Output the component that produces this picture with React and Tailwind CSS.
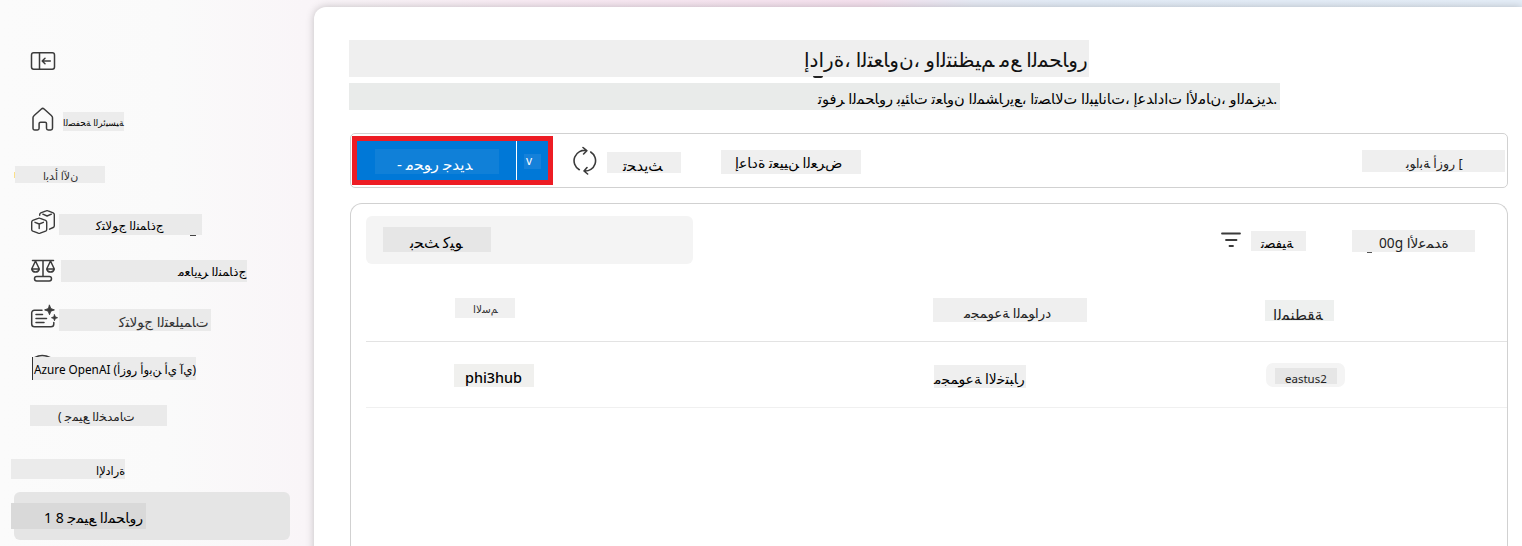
// Joined Arabic forms: first code point and number of contextual shapes.
const FORMS = {
  'ا': [0xfe8d, 2], 'أ': [0xfe83, 2], 'إ': [0xfe87, 2], 'آ': [0xfe81, 2], 'ب': [0xfe8f, 4], 'ة': [0xfe93, 2],
  'ت': [0xfe95, 4], 'ث': [0xfe99, 4], 'ج': [0xfe9d, 4], 'ح': [0xfea1, 4], 'خ': [0xfea5, 4], 'د': [0xfea9, 2],
  'ذ': [0xfeab, 2], 'ر': [0xfead, 2], 'ز': [0xfeaf, 2], 'س': [0xfeb1, 4], 'ش': [0xfeb5, 4], 'ص': [0xfeb9, 4],
  'ض': [0xfebd, 4], 'ط': [0xfec1, 4], 'ظ': [0xfec5, 4], 'ع': [0xfec9, 4], 'ف': [0xfed1, 4], 'ق': [0xfed5, 4],
  'ك': [0xfed9, 4], 'ل': [0xfedd, 4], 'م': [0xfee1, 4], 'ن': [0xfee5, 4], 'و': [0xfeed, 2], 'ي': [0xfef1, 4],
  'ئ': [0xfe89, 4], 'ﻻ': [0xfefb, 2], 'ﻵ': [0xfef5, 2], 'ﻷ': [0xfef7, 2], 'ﻹ': [0xfef9, 2],
};

function shape(text) {
  const merged = text.replace(/لا/g, 'ﻻ').replace(/لآ/g, 'ﻵ').replace(/لأ/g, 'ﻷ').replace(/لإ/g, 'ﻹ');
  const chars = [...merged];
  return chars
    .map((ch, i) => {
      const form = FORMS[ch];
      if (!form) return ch;
      const prev = FORMS[chars[i - 1]]?.[1] === 4;
      const next = Boolean(FORMS[chars[i + 1]]) && form[1] === 4;
      return String.fromCharCode(form[0] + (prev && next ? 3 : next ? 2 : prev ? 1 : 0));
    })
    .join('');
}

function Label({ children, className, mark }) {
  return (
    <div className={`relative flex shrink-0 items-start whitespace-nowrap leading-[18px] [unicode-bidi:bidi-override] ${className}`}>
      {shape(children)}
      {mark && <span className={`absolute ${mark}`} />}
    </div>
  );
}

function Icon({ children, className = '', ...rest }) {
  return (
    <svg fill="none" stroke="#3b3b3b" strokeWidth="1.5" strokeLinecap="round" strokeLinejoin="round" className={`shrink-0 ${className}`} {...rest}>
      {children}
    </svg>
  );
}

function Sidebar() {
  return (
    <aside className="flex h-full w-[314px] shrink-0 flex-col items-start">
      <Icon width="26" height="20" viewBox="0 0 26 20" className="mt-[51px] ml-[30px]">
        <rect x="1.5" y="1.7" width="23" height="16.6" rx="2.2" />
        <path d="M9.5 1.7v16.6M20.3 10h-8M15 7.3 12.2 10l2.8 2.7" />
      </Icon>

      <div className="mt-[36px] ml-[30px] flex h-[25px] items-start">
        <Icon width="26" height="25" viewBox="0 0 26 25">
          <path d="M3 10.8c0-.8.3-1.5.9-2L11.4 2a2 2 0 0 1 2.7 0l7.5 6.8c.6.5.9 1.2.9 2v10.4c0 1-.7 1.7-1.7 1.7h-2.6c-1 0-1.700-.7-1.700-1.700v-4.600c0-.9-.6-1.400-1.400-1.400h-4.500c-.9 0-1.500.5-1.500 1.400v4.600c0 1-.7 1.700-1.600 1.700H4.700c-1 0-1.700-.7-1.700-1.700z" />
        </Icon>
        <Label className="mt-[5px] ml-[7px] h-[19px] w-[61px] bg-[#ececec] pt-[2px] text-[8.9px] text-black">الصفحة الرئيسية</Label>
      </div>

      <Label mark="top-[6px] -left-px h-[6px] w-px bg-[#fbe08a]" className="mt-[34px] ml-[15px] h-[17px] w-[90px] bg-[#ececec] pt-px pl-[28px] text-[11px] text-[#333]">ابدأ الآن</Label>

      <div className="mt-[26px] ml-[30px] flex h-[27px] items-start">
        <Icon width="26" height="26" viewBox="0 0 26 26" strokeWidth="1.4">
          <path d="M9.700 6.300V5.500c0-.8.400-1.400 1.100-1.700l5.300-2c.7-.3 1.300-.3 2 0l5.100 2c.7.300 1.100.9 1.100 1.700v11.300c0 .8-.4 1.400-1.100 1.700l-3.700 1.700M12.800 5.200l4.300 1.800 4.300-1.800" />
          <path d="M1.700 13c0-.7.400-1.300 1.100-1.600l5.400-2c.7-.3 1.400-.3 2 0l5.400 2c.7.300 1.100.9 1.100 1.600v7.500c0 .8-.4 1.400-1.100 1.700l-5.400 2c-.7.2-1.300.2-2 0l-5.400-2c-.7-.3-1.100-.9-1.100-1.700zM5 13.300l4.200 1.700 4.200-1.700M9.200 15v4.500" />
        </Icon>
        <Label mark="top-[21px] left-[131px] h-px w-[6px] bg-[#444]" className="mt-[5px] ml-[3px] h-[21px] w-[143px] bg-[#eaeaea] pt-[3px] pl-[37px] text-[12px] text-black">كتالوج النماذج</Label>
      </div>

      <div className="mt-[22px] ml-[30px] flex h-[26px] items-start">
        <Icon width="26" height="26" viewBox="0 0 26 26">
          <path d="M2.500 2.500h21M13 2.500V18M5.500 3 1.700 11a3.900 3.900 0 0 0 7.600 0L5.500 3ZM1.700 11h7.600M20.500 3l-3.800 8a3.900 3.900 0 0 0 7.600 0zM16.700 11h7.600" />
          <rect x="4.500" y="18.500" width="17" height="4.500" rx="2.200" />
        </Icon>
        <Label className="mt-[2px] ml-[5px] h-[22px] w-[186px] bg-[#eaeaea] pt-[3px] pl-[117px] text-[12.3px] text-black">معايير النماذج</Label>
      </div>

      <div className="mt-[20px] ml-[30px] flex h-[27px] items-start">
        <Icon width="29" height="26" viewBox="0 0 29 26">
          <path d="M12 6.200H4.500c-1.700 0-2.800 1.200-2.800 2.800v11c0 1.600 1.100 2.800 2.800 2.800H21c1.700 0 2.800-1.200 2.800-2.800v-1.500M6 10.500h6.500M6 14.500h10.500M6 18.500h8" />
          <path d="M19.500 1.200l1.300 3.400 3.600 1.300-3.600 1.300-1.300 3.500-1.300-3.500-3.600-1.300 3.600-1.300zM24.500 10.800l.8 2.100 2.200.8-2.200.8-.8 2.200-.8-2.200-2.200-.8 2.200-.8z" fill="#3b3b3b" strokeWidth=".9" />
        </Icon>
        <Label className="mt-[5px] h-[22px] w-[152px] bg-[#eaeaea] pt-[4px] pl-[60px] text-[13.6px] text-[#333]">كتالوج التعليمات</Label>
      </div>

      <div className="mt-[23px] ml-[32px] flex flex-col">
        <Icon width="22" height="3" viewBox="0 0 22 3">
          <path d="M2 4Q10-1 19 4" />
        </Icon>
        <Label className="h-[23px] w-[164px] border-l border-[#333] bg-[#ebebeb] pt-[3px] pl-px text-[11.75px] text-black">Azure OpenAI (أزور أوبن أي آي)</Label>
      </div>

      <Label className="mt-[25px] ml-[30px] h-[21px] w-[137px] bg-[#eaeaea] pt-[3px] pl-[28px] text-[12px] text-[#222]">( جميع الخدمات</Label>
      <Label className="mt-[33px] ml-[11px] h-[20px] w-[114px] bg-[#ebebeb] pt-[3px] pl-[85px] text-[11.3px] text-black">الإدارة</Label>

      <div className="mt-[13px] ml-[14px] h-[48px] w-[276px] shrink-0 rounded-md bg-[#e5e5e5] pt-[11px]">
        <Label className="-ml-[3px] h-[26px] w-[135px] bg-[#d9d9d9] pt-[6px] pl-[33px] text-[14.1px] text-black">1 8 جميع المحاور</Label>
      </div>
    </aside>
  );
}

function Toolbar() {
  return (
    <div className="mt-[23px] flex h-[55px] w-[1158px] items-start rounded-[5px] border border-[#d1d1d1]">
      <div className="mt-[2px] ml-px flex h-[49px] w-[201px] shrink-0 border-[5px] border-[#ed1c24] bg-[#0078d7]">
        <div className="flex w-[160px] items-start border-r border-white">
          <Label className="mt-[8px] ml-[18px] h-[25px] w-[124px] bg-[#1080d8] pt-[6px] pl-[22px] text-[15.2px] text-white">- محور جديد</Label>
        </div>
        <Label className="mt-[13px] ml-[7px] h-[15px] w-[17px] bg-[#1581da] pt-px pl-[2px] text-[12px] leading-[12px]! text-white">v</Label>
      </div>
      <Icon width="25" height="29" viewBox="0 0 25 29" className="mt-[12px] ml-[20px]" strokeWidth="1.600">
        <path d="M6.300 23.700A10.300 10.300 0 0 1 13.700 4.700M10 1.500 13.800 4.700 10.600 8M17.700 6A10.300 10.300 0 0 1 11.300 25M14.600 28 11 25 14 21.500" />
      </Icon>
      <Label className="mt-[18px] ml-[9px] h-[21px] w-[74px] bg-[#efefef] pt-[4px] pl-[16px] text-[14.6px] text-black">تحديث</Label>
      <Label className="mt-[16px] ml-[40px] h-[24px] w-[140px] bg-[#efefef] pt-[4px] pl-[14px] text-[14.1px] text-black">إعادة تعيين العرض</Label>
      <Label className="mt-[16px] mr-[2px] ml-auto h-[22px] w-[143px] bg-[#efefef] pt-[4px] pl-[44px] text-[12.7px] text-[#222]">بوابة أزور [</Label>
    </div>
  );
}

function HubsTable() {
  return (
    <div className="mt-[15px] flex h-[360px] w-[1158px] flex-col rounded-t-[12px] border border-b-0 border-[#d1d1d1] pl-[15px]">
      <div className="flex h-[138px] shrink-0 flex-col border-b border-[#e3e3e3]">
        <div className="flex h-[94px] items-start">
          <div className="mt-[12px] h-[48px] w-[327px] rounded-md bg-[#f4f4f4] pt-[11px] pl-[17px]">
            <Label className="h-[25px] w-[108px] bg-[#e6e6e6] pt-[6px] pl-[27px] text-[15.2px] text-black">بحث كيو</Label>
          </div>
          <Icon width="22" height="18" viewBox="0 0 22 18" className="mt-[27px] ml-[527px]" strokeWidth="1.800">
            <path d="M2 2.500h18M6 9h10.500M9.500 15h3.500" />
          </Icon>
          <Label className="mt-[27px] ml-[9px] h-[20px] w-[55px] bg-[#efefef] pt-[3px] pl-[10px] text-[12.9px] text-black">تصفية</Label>
          <Label mark="top-[22px] left-[15px] h-px w-[5px] bg-[#555]" className="mt-[26px] ml-[46px] h-[22px] w-[123px] bg-[#efefef] pt-[4px] pl-[27px] text-[13.7px] text-[#222]">00g الأعمدة</Label>
        </div>
        <div className="flex items-start">
          <Label className="ml-[89px] h-[20px] w-[60px] bg-[#f0f0f0] pt-[2px] pl-[18px] text-[10.5px] text-[#333]">الاسم</Label>
          <Label className="ml-[418px] h-[24px] w-[154px] bg-[#efefef] pt-[6px] pl-[31px] text-[13.3px] text-[#222]">مجموعة الموارد</Label>
          <Label className="mt-[2px] ml-[178px] h-[21px] w-[69px] bg-[#eef0ef] pt-[5px] pl-[8px] text-[15px] text-[#222]">المنطقة</Label>
        </div>
      </div>
      <div className="flex h-[66px] shrink-0 items-start border-b border-[#f0f0f0] pt-[22px]">
        <Label className="ml-[88px] h-[23px] w-[80px] bg-[#f0f0ee] pt-[5px] pl-[11px] text-[14.4px] font-medium text-black">phi3hub</Label>
        <Label className="mt-px ml-[400px] h-[23px] w-[92px] bg-[#efefef] pt-[5px] text-[13.9px] text-black">مجموعة الاختبار</Label>
        <div className="-mt-px ml-[240px] h-[24px] w-[79px] rounded-[7px] bg-[#f4f4f4] pt-[5px] pl-[9px]">
          <Label className="h-[16px] w-[62px] bg-[#e6e6e6] pt-[2px] pl-[10px] text-[11.500px] text-[#222]">eastus2</Label>
        </div>
      </div>
    </div>
  );
}

export default function App() {
  return (
    <div
      dir="ltr"
      className="flex h-[546px] w-[1522px] overflow-hidden bg-[linear-gradient(90deg,#fbfbfb_0%,#fafafa_11%,#f9f5f8_20%,#f8eaf3_36%,#f5e1ee_57%,#e7ebf5_64%,#e3ecf7_70%,#e5eef8_100%)] font-['Noto_Sans','DejaVu_Sans',sans-serif]"
    >
      <Sidebar />
      <main className="mt-[7px] flex h-[560px] flex-1 flex-col items-start overflow-hidden rounded-tl-[12px] bg-white pl-[35px] shadow-[0_0_8px_rgba(0,0,0,0.22)]">
        <Label mark="top-[36px] left-[464px] h-[2px] w-[10px] rounded-b-full bg-[#222]" className="mt-[33px] h-[37px] w-[740px] bg-[#efefef] pt-[11px] pl-[455px] text-[20px] text-[#111]">إدارة، التعاون، والتنظيم مع المحاور</Label>
        <Label className="mt-[6px] h-[27px] w-[931px] bg-[#e9ebea] pt-[6px] pl-[469px] text-[14.55px] text-black">
          توفر المحاور بيئات تعاون المشاريع، اتصالات البيانات، إعدادات الأمان، والمزيد.
        </Label>
        <div className="ml-px flex flex-col">
          <Toolbar />
          <HubsTable />
        </div>
      </main>
    </div>
  );
}
